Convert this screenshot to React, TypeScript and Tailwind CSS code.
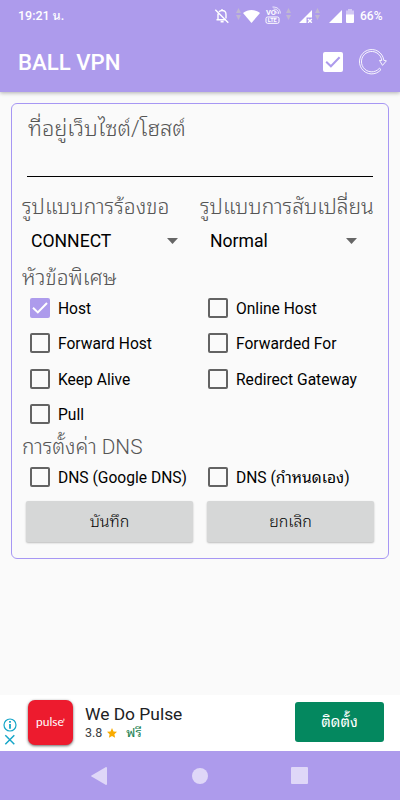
type CheckItem = {
  label: string;
  checked?: boolean;
};

const headers: CheckItem[] = [
  { label: "Host", checked: true },
  { label: "Online Host" },
  { label: "Forward Host" },
  { label: "Forwarded For" },
  { label: "Keep Alive" },
  { label: "Redirect Gateway" },
  { label: "Pull" },
];

const DataArrows = () => (
  <svg className="h-3 w-[5px]" viewBox="0 0 5 12" fill="#c0b7d2">
    <path d="M2.5 0 5 5H0zM0 7h5l-2.5 5z" />
  </svg>
);

const StatusBar = () => (
  <div className="flex h-8 items-center pl-[18px] text-[12px] font-medium text-white">
    <span className="w-[196px] text-[12.5px]">19:21 น.</span>
    <svg className="h-4 w-4" viewBox="0 0 16 16" fill="none" stroke="#fff" strokeWidth="1.4">
      <path d="M5 3.8C6 2.8 7 2.5 8 2.5c2.6 0 4 1.8 4 4v4M4 5.5v6.3H2.5M4 11.8h8M8 2.5V1M1.3 1.8l13 13" />
      <path d="M6.6 13.6h3" strokeWidth="1.8" />
    </svg>
    <div className="ml-[6px] -mt-1">
      <DataArrows />
    </div>
    <svg className="ml-[2px] h-[13px] w-[17px]" viewBox="0 0 17 13" fill="#fff">
      <path d="M0 3C5-1 12-1 17 3L8.5 13z" />
    </svg>
    <div className="relative ml-[5px] -mt-[2px] h-[18px] w-[16px] text-[7.5px] leading-none font-bold">
      <span className="absolute top-[3px] left-[1px]">VO</span>
      <svg className="absolute inset-0 h-[18px] w-4" viewBox="0 0 16 18" fill="none" stroke="#fff">
        <path d="M10 5.2c1.3.2 2 1 2 2.5M8.5 3c3.4 0 5.2 1.7 5.2 5M7.5 1c5 0 7.8 2.4 7.8 6.5" strokeWidth="0.8" />
        <rect x="1" y="11" width="13" height="6.3" rx="1.5" strokeWidth="1" />
      </svg>
      <span className="absolute top-[11.5px] left-[2.8px] text-[5.5px]">LTE</span>
    </div>
    <div className="ml-[5px] -mt-1">
      <DataArrows />
    </div>
    <svg className="ml-[8px] h-[13px] w-[14px]" viewBox="0 0 14 13">
      <path d="M13 0v7.5H7.5V13H0z" fill="#fff" />
      <path d="m9 9 3.8 3.8m0-3.8L9 12.8" stroke="#fff" strokeWidth="1.4" />
    </svg>
    <div className="ml-[2px] -mt-1">
      <DataArrows />
    </div>
    <svg className="ml-[9px] h-[13px] w-[13px]" viewBox="0 0 13 13" fill="#fff">
      <path d="M13 0v13H0z" />
    </svg>
    <svg className="ml-[4px] h-[14px] w-2" viewBox="0 0 8 14" fill="#fff">
      <path d="M2 0h4v1.5h2V6H0V1.5h2z" opacity="0.45" />
      <path d="M0 5.5h8V13a1 1 0 0 1-1 1H1a1 1 0 0 1-1-1z" />
    </svg>
    <span className="ml-[6px] whitespace-nowrap">66%</span>
  </div>
);

const Toolbar = () => (
  <div className="flex h-[60px] items-center pr-[13px] pl-[18px] text-white">
    <h1 className="flex-1 text-[22.2px] leading-none font-medium">BALL VPN</h1>
    <svg className="h-5 w-5" viewBox="0 0 20 20">
      <rect width="20" height="20" rx="2" fill="#fff" />
      <path d="m3.2 9.8 4.7 4.5 8.7-9" fill="none" stroke="#ad9bec" strokeWidth="2" />
    </svg>
    <svg className="ml-[16px] h-[27px] w-[28px]" viewBox="0 0 28 27" fill="none" stroke="#fff" strokeWidth="0.9">
      <path d="M24.8 11.3A12.2 12.2 0 1 0 22 20.6L20.4 19.3A10.2 10.2 0 1 1 22.8 11.5" />
      <path d="M22.8 11.5 20.5 11.4l3 5 3.9-4.6-2.6-.5" />
    </svg>
  </div>
);

const CheckBox = ({ label, checked }: CheckItem) => (
  <label className="flex h-[35.5px] items-center whitespace-nowrap">
    {checked ? (
      <svg className="h-5 w-5" viewBox="0 0 20 20">
        <rect width="20" height="20" rx="2" fill="#ad9bec" />
        <path d="m3 9.8 4.8 4.6L17 5" fill="none" stroke="#fff" strokeWidth="2" />
      </svg>
    ) : (
      <span className="h-5 w-5 rounded-[2px] border-2 border-[#636363]" />
    )}
    <span className="mt-[2px] ml-2 text-[15.6px] leading-5">{label}</span>
  </label>
);

const Spinner = ({ value }: { value: string }) => (
  <div className="flex h-[30px] w-[147px] items-center justify-between">
    <span className="mt-px text-[17.6px]">{value}</span>
    <svg className="h-[6px] w-[11px]" viewBox="0 0 11 6" fill="#666">
      <path d="M0 0h11L5.5 6z" />
    </svg>
  </div>
);

const ActionButton = ({ label }: { label: string }) => (
  <button className="h-[41px] w-[167px] rounded-[2px] bg-[#d6d7d7] pt-[2px] text-[16px] font-light shadow-[0_1px_2px_rgba(0,0,0,0.25)]">
    {label}
  </button>
);

const AdBanner = () => (
  <div className="flex h-14 bg-white">
    <div className="flex w-7 flex-col items-start gap-[2px] pt-[23px] pl-[3px]">
      <svg className="h-[14px] w-[14px]" viewBox="0 0 14 14" fill="none" stroke="#16a6c8">
        <circle cx="7" cy="7" r="6" strokeWidth="1.2" />
        <path d="M7 6v4.8M7 3v1.7" strokeWidth="1.8" />
      </svg>
      <svg className="ml-[1px] h-3 w-3" viewBox="0 0 12 12" stroke="#16a6c8" strokeWidth="1.5">
        <path d="m1.3 1.3 9 9m0-9-9 9" />
      </svg>
    </div>
    <div className="mt-[5px] flex h-[45px] w-[45px] items-center justify-center rounded-[7px] bg-[#ed1b2e] pb-px font-['Lato'] text-[12px] text-white shadow-[0_1px_3px_rgba(0,0,0,0.6)]">
      <span>pulse</span>
      <span className="-ml-px text-[10px]">’</span>
    </div>
    <div className="ml-3 flex-1 whitespace-nowrap">
      <div className="mt-[9px] text-[17.4px] leading-[20px] text-[#202124]">We Do Pulse</div>
      <div className="flex h-[18px] items-center text-[13px] text-[#3c4043]">
        <span className="text-[12.5px]">3.8</span>
        <svg className="ml-[5px] h-[10px] w-[10px]" viewBox="0 0 10 10" fill="#f9ab00">
          <path d="m5 0 1.5 3.4 3.5.4-2.6 2.4.7 3.6L5 8 1.9 9.8l.7-3.6L0 3.8l3.5-.4z" />
        </svg>
        <span className="ml-[9px] text-[#188050]">ฟรี</span>
      </div>
    </div>
    <button className="mt-[7px] mr-4 h-10 w-[89px] rounded-[3px] bg-[#04885f] text-[15px] text-white">
      ติดตั้ง
    </button>
  </div>
);

const NavBar = () => (
  <div className="flex h-[49px] items-center bg-[#ad9bec] pl-[91px]">
    <svg className="h-[18px] w-4" viewBox="0 0 16 18" fill="#dfd7f8">
      <path d="M15 0q1 0 1 1v16q0 1-1 1L.5 9.5q-.8-.5 0-1z" />
    </svg>
    <span className="ml-[85px] h-4 w-4 rounded-full bg-[#dfd7f8]" />
    <span className="ml-[83px] h-[17px] w-[17px] rounded-[1px] bg-[#dfd7f8]" />
  </div>
);

const App = () => {
  return (
    <div
      lang="th"
      className="flex h-[800px] w-[400px] flex-col overflow-hidden bg-[#fafafa] font-[Roboto,'Noto_Sans_Thai_Looped','Noto_Looped_Thai',Loma,Garuda,Waree,'Droid_Sans_Thai',Tlwg_Typo,serif] text-black"
    >
      <header className="h-[92px] bg-[#ad9bec] shadow-[0_1px_4px_rgba(0,0,0,0.3)]">
        <StatusBar />
        <Toolbar />
      </header>

      <main className="mx-[11px] mt-[11px] h-[456px] rounded-[6px] border border-[#a797f4]">
        <div className="mx-[15px] h-[73px] border-b border-black pt-[10px] pl-px text-[21.8px] leading-[30px] font-light text-[#555]">
          ที่อยู่เว็บไซต์/โฮสต์
        </div>
        <div className="mt-[13px] flex h-[32px] items-center pt-[3px] pl-[10px] text-[21px] font-light whitespace-nowrap text-[#555]">
          <span className="w-[178px]">รูปแบบการร้องขอ</span>
          <span>รูปแบบการสับเปลี่ยน</span>
        </div>
        <div className="flex gap-[32px] pt-[4px] pl-[19px]">
          <Spinner value="CONNECT" />
          <Spinner value="Normal" />
        </div>
        <div className="mt-[6px] flex h-[30px] items-center pt-[3px] pl-[10px] text-[21px] font-light text-[#555]">
          หัวข้อพิเศษ
        </div>
        <div className="-mt-[2px] grid grid-cols-[178px_180px] pl-[18px]">
          {headers.map((item) => (
            <CheckBox key={item.label} {...item} />
          ))}
        </div>
        <div className="flex h-[28px] items-center pt-[3px] pl-[10px] text-[20.8px] font-light text-[#555]">
          การตั้งค่า DNS
        </div>
        <div className="-mt-px grid grid-cols-[178px_180px] pl-[18px]">
          <CheckBox label="DNS (Google DNS)" />
          <CheckBox label="DNS (กำหนดเอง)" />
        </div>
        <div className="mt-[6px] flex gap-[14px] pl-[14px]">
          <ActionButton label="บันทึก" />
          <ActionButton label="ยกเลิก" />
        </div>
      </main>

      <footer className="mt-auto">
        <AdBanner />
        <NavBar />
      </footer>
    </div>
  );
};

export default App;
